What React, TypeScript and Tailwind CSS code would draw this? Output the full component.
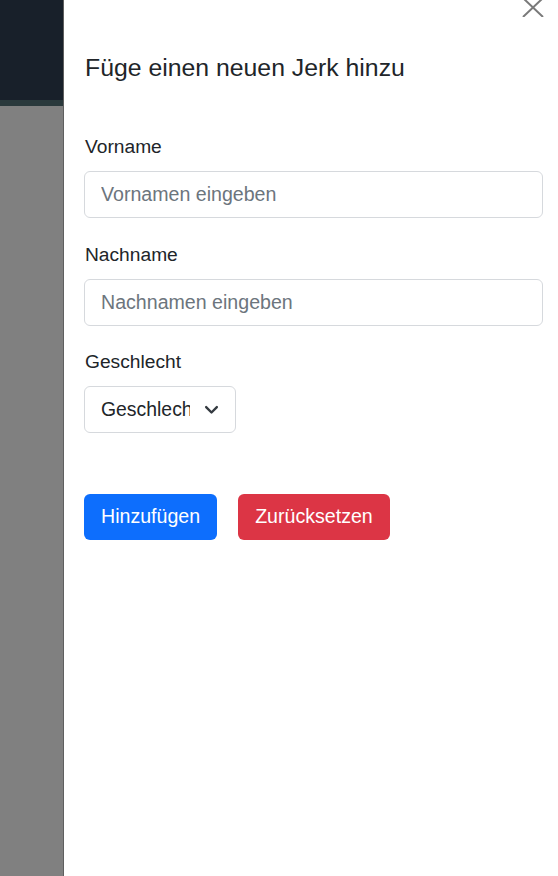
export default function App() {
  return (
    <div className="flex w-[558px] h-[876px] overflow-hidden bg-white font-['Liberation_Sans',Arial,sans-serif]">
      {/* page behind the backdrop */}
      <div className="flex flex-col w-[63px] shrink-0">
        <div className="h-[100px] bg-[#18202a]" />
        <div className="h-[6px] bg-[#2a393c]" />
        <div className="flex-1 bg-[#808080]" />
      </div>
      <div className="w-px shrink-0 bg-[#5f5f5f]" />

      {/* offcanvas */}
      <div className="relative flex-1 bg-white pl-[20px] pr-[15px]">
        <button className="absolute right-[14px] top-[-2px] text-[#7a7a7a]">
          <svg width="22" height="19" viewBox="0 0 22 19" fill="none" stroke="currentColor" strokeWidth="2">
            <path d="M1 0l20 19M21 0L1 19" />
          </svg>
        </button>

        <h5 className="pt-[53px] pl-px text-[24.8px] leading-[30px] text-[#212529]">Füge einen neuen Jerk hinzu</h5>

        <form className="mt-[52px]">
          <label className="block pl-px text-[19.2px] leading-[23px] text-[#212529]">Vorname</label>
          <input
            readOnly
            placeholder="Vornamen eingeben"
            className="mt-[13px] block w-full h-[47px] px-[16px] rounded-[6px] border border-[#d6d9dd] text-[19.6px] text-[#212529] placeholder:text-[#6c757d] outline-none"
          />

          <label className="mt-[25px] block pl-px text-[19.2px] leading-[23px] text-[#212529]">Nachname</label>
          <input
            readOnly
            placeholder="Nachnamen eingeben"
            className="mt-[13px] block w-full h-[47px] px-[16px] rounded-[6px] border border-[#d6d9dd] text-[19.6px] text-[#212529] placeholder:text-[#6c757d] outline-none"
          />

          <label className="mt-[24px] block pl-px text-[19.2px] leading-[23px] text-[#212529]">Geschlecht</label>
          <div className="mt-[13px] flex items-center w-[152px] h-[47px] pl-[16px] rounded-[6px] border border-[#d6d9dd]">
            <span className="w-[89px] overflow-hidden whitespace-nowrap text-[19.4px] text-[#212529]">Geschlecht</span>
            <svg className="ml-[12px]" width="19" height="19" viewBox="0 0 16 16" fill="none" stroke="#343a40" strokeWidth="2" strokeLinecap="round" strokeLinejoin="round">
              <path d="M3.5 6l4.5 4.5L12.5 6" />
            </svg>
          </div>

          <div className="mt-[61px] flex gap-[21px]">
            <button type="button" className="h-[46px] px-[17px] rounded-[6px] bg-[#0d6efd] text-[19.6px] text-white">Hinzufügen</button>
            <button type="button" className="h-[46px] px-[17px] rounded-[6px] bg-[#dc3545] text-[19.6px] text-white">Zurücksetzen</button>
          </div>
        </form>
      </div>
    </div>
  )
}
